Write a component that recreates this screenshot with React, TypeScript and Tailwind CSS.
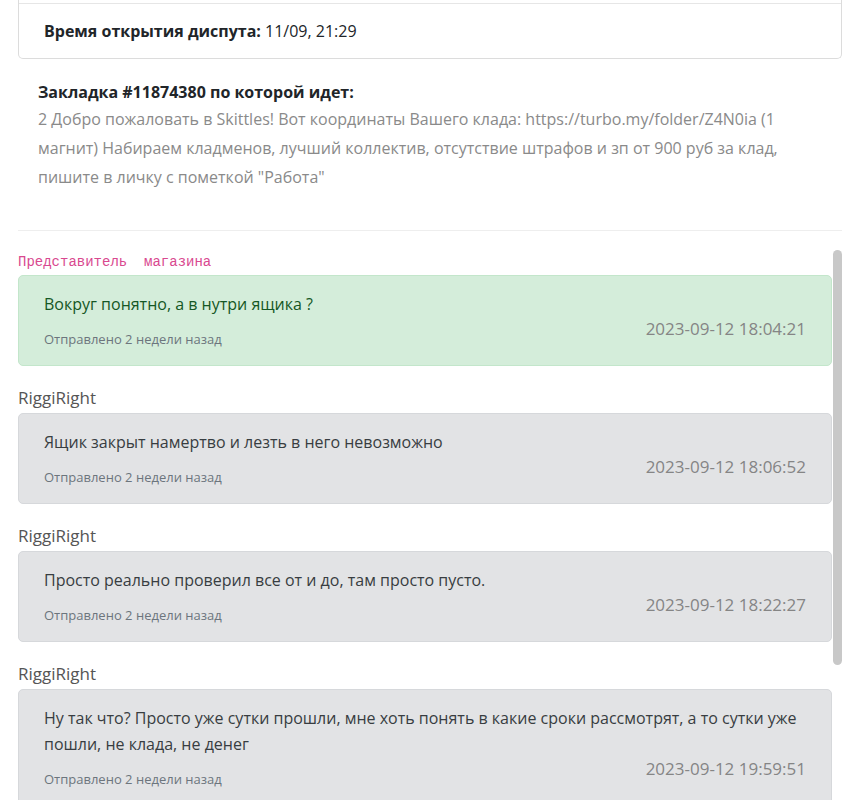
import React from 'react';

type Message = {
  author: string;
  isShop?: boolean;
  text: string;
  sentAgo: string;
  date: string;
};

const messages: Message[] = [
  { author: 'Представитель  магазина', isShop: true, text: 'Вокруг понятно, а в нутри ящика ?', sentAgo: 'Отправлено 2 недели назад', date: '2023-09-12 18:04:21' },
  { author: 'RiggiRight', text: 'Ящик закрыт намертво и лезть в него невозможно', sentAgo: 'Отправлено 2 недели назад', date: '2023-09-12 18:06:52' },
  { author: 'RiggiRight', text: 'Просто реально проверил все от и до, там просто пусто.', sentAgo: 'Отправлено 2 недели назад', date: '2023-09-12 18:22:27' },
  {
    author: 'RiggiRight',
    text: 'Ну так что? Просто уже сутки прошли, мне хоть понять в какие сроки рассмотрят, а то сутки уже пошли, не клада, не денег',
    sentAgo: 'Отправлено 2 недели назад',
    date: '2023-09-12 19:59:51',
  },
];

function ChatMessage({ msg }: { msg: Message }) {
  return (
    <div className="mb-[20px]">
      {msg.isShop ? (
        <div className="text-[14px] leading-[19px] text-[#d9498f] font-['Liberation_Mono',monospace] whitespace-pre">{msg.author}</div>
      ) : (
        <div className="text-[17px] leading-[24px] text-[#555]">{msg.author}</div>
      )}
      <div
        className={
          msg.isShop
            ? 'mt-[3px] rounded-[5px] border border-[#c3e6cb] bg-[#d4edda] text-[#155724] px-[25px] pt-[15px] pb-[17px]'
            : 'mt-[3px] rounded-[5px] border border-[#d6d8db] bg-[#e2e3e5] text-[#383d41] px-[25px] pt-[15px] pb-[17px]'
        }
      >
        <p className="text-[16px] leading-[26px]">{msg.text}</p>
        <div className="flex justify-between items-end">
          <span className="text-[13px] leading-[18px] text-[#6c757d]">{msg.sentAgo}</span>
          <span className="text-[17px] leading-[24px] text-[#858585] mb-[7px]">{msg.date}</span>
        </div>
      </div>
    </div>
  );
}

export default function App() {
  return (
    <div className="w-[860px] h-[800px] overflow-hidden bg-white font-['Open_Sans',sans-serif] text-[#212529]">
      <div className="px-[18px]">
        <div className="border-x border-b border-[#dcdcdc] rounded-b-[5px]">
          <div className="h-[3px]" />
          <div className="border-t border-[#e6e6e6] px-[25px] py-[15px] text-[16px] leading-[24px]">
            <b className="font-bold">Время открытия диспута:</b> 11/09, 21:29
          </div>
        </div>

        <div className="px-[20px] pt-[21px] pb-[38px]">
          <div className="text-[16px] leading-[24px] font-bold text-[#212529]">Закладка #11874380 по которой идет:</div>
          <p className="mt-[1px] text-[16px] leading-[29px] text-[#8a8a8a]">
            2 Добро пожаловать в Skittles! Вот координаты Вашего клада: https://turbo.my/folder/Z4N0ia (1 магнит) Набираем кладменов, лучший коллектив, отсутствие штрафов и зп от 900 руб за клад, пишите в личку с пометкой "Работа"
          </p>
        </div>

        <div className="border-t border-[#eeeeee]" />

        <div className="flex mt-[19px]">
          <div className="flex-1 pt-[3px]">
            {messages.map((m, i) => (
              <ChatMessage key={i} msg={m} />
            ))}
          </div>
          <div className="w-[10px] pl-[1px]">
            <div className="w-[9px] h-[415px] bg-[#c8c8c8] rounded-full" />
          </div>
        </div>
      </div>
    </div>
  );
}
